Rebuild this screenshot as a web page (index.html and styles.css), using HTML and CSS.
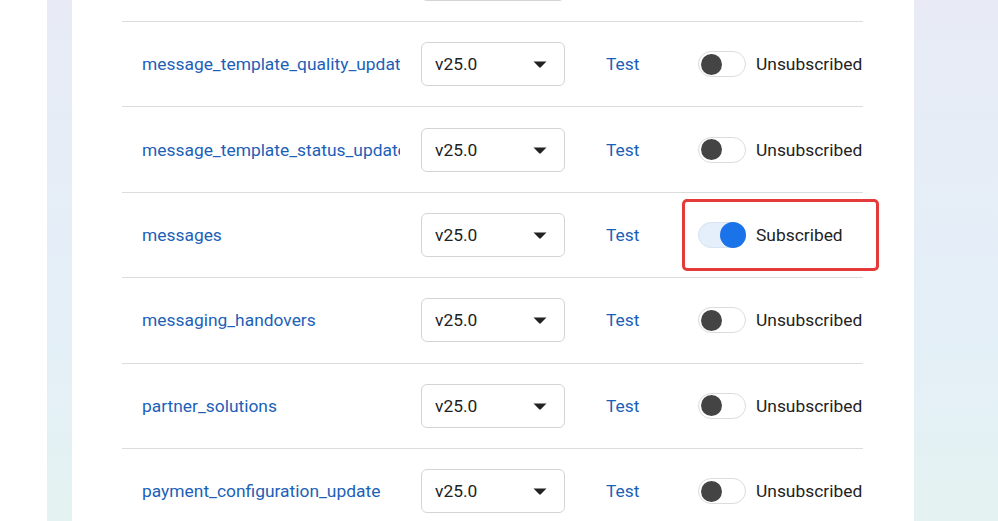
FILE: index.html
```html
<!DOCTYPE html>
<html lang="en">
<head>
<meta charset="utf-8">
<title>Webhook fields</title>
<link rel="stylesheet" href="styles.css">
</head>
<body>
<div class="page">
  <div class="card">
    <div class="table">
      <div class="row">
        <div class="name"><a href="#">message_template_components_update</a></div>
        <div class="select"><span>v25.0</span><svg class="caret" viewBox="0 0 14 7" width="14" height="7"><path d="M0.5 0.5 L13.5 0.5 L7.8 6.3 Q7 7 6.2 6.3 Z" fill="#222"/></svg></div>
        <div class="test"><a href="#">Test</a></div>
        <div class="sub"><span class="toggle"><span class="knob"></span></span><span class="label">Unsubscribed</span></div>
      </div>
      <div class="row">
        <div class="name"><a href="#">message_template_quality_update</a></div>
        <div class="select"><span>v25.0</span><svg class="caret" viewBox="0 0 14 7" width="14" height="7"><path d="M0.5 0.5 L13.5 0.5 L7.8 6.3 Q7 7 6.2 6.3 Z" fill="#222"/></svg></div>
        <div class="test"><a href="#">Test</a></div>
        <div class="sub"><span class="toggle"><span class="knob"></span></span><span class="label">Unsubscribed</span></div>
      </div>
      <div class="row">
        <div class="name"><a href="#">message_template_status_update</a></div>
        <div class="select"><span>v25.0</span><svg class="caret" viewBox="0 0 14 7" width="14" height="7"><path d="M0.5 0.5 L13.5 0.5 L7.8 6.3 Q7 7 6.2 6.3 Z" fill="#222"/></svg></div>
        <div class="test"><a href="#">Test</a></div>
        <div class="sub"><span class="toggle"><span class="knob"></span></span><span class="label">Unsubscribed</span></div>
      </div>
      <div class="row highlighted">
        <div class="name"><a href="#">messages</a></div>
        <div class="select"><span>v25.0</span><svg class="caret" viewBox="0 0 14 7" width="14" height="7"><path d="M0.5 0.5 L13.5 0.5 L7.8 6.3 Q7 7 6.2 6.3 Z" fill="#222"/></svg></div>
        <div class="test"><a href="#">Test</a></div>
        <div class="sub"><span class="toggle on"><span class="knob"></span></span><span class="label">Subscribed</span></div>
        <div class="mark"></div>
      </div>
      <div class="row">
        <div class="name"><a href="#">messaging_handovers</a></div>
        <div class="select"><span>v25.0</span><svg class="caret" viewBox="0 0 14 7" width="14" height="7"><path d="M0.5 0.5 L13.5 0.5 L7.8 6.3 Q7 7 6.2 6.3 Z" fill="#222"/></svg></div>
        <div class="test"><a href="#">Test</a></div>
        <div class="sub"><span class="toggle"><span class="knob"></span></span><span class="label">Unsubscribed</span></div>
      </div>
      <div class="row">
        <div class="name"><a href="#">partner_solutions</a></div>
        <div class="select"><span>v25.0</span><svg class="caret" viewBox="0 0 14 7" width="14" height="7"><path d="M0.5 0.5 L13.5 0.5 L7.8 6.3 Q7 7 6.2 6.3 Z" fill="#222"/></svg></div>
        <div class="test"><a href="#">Test</a></div>
        <div class="sub"><span class="toggle"><span class="knob"></span></span><span class="label">Unsubscribed</span></div>
      </div>
      <div class="row">
        <div class="name"><a href="#">payment_configuration_update</a></div>
        <div class="select"><span>v25.0</span><svg class="caret" viewBox="0 0 14 7" width="14" height="7"><path d="M0.5 0.5 L13.5 0.5 L7.8 6.3 Q7 7 6.2 6.3 Z" fill="#222"/></svg></div>
        <div class="test"><a href="#">Test</a></div>
        <div class="sub"><span class="toggle"><span class="knob"></span></span><span class="label">Unsubscribed</span></div>
      </div>
    </div>
  </div>
</div>
</body>
</html>
```
FILE: styles.css
```css
html, body {
  margin: 0;
  padding: 0;
  height: 100%;
  overflow: hidden;
  background: #ffffff;
  font-family: Roboto, "Liberation Sans", Arial, sans-serif;
}

.page {
  margin-left: 47px;
  height: 100%;
  padding: 0 84px 0 25px;
  background: linear-gradient(180deg, #e8ebf6 0%, #e4eff8 60%, #e4f2f1 100%);
  box-sizing: border-box;
}

.card {
  background: #ffffff;
  height: 100%;
  padding: 0 51px 0 50px;
  overflow: hidden;
}

.table {
  margin-top: -63.4px;
}

.row {
  position: relative;
  display: flex;
  align-items: center;
  height: 85.4px;
  box-sizing: border-box;
  border-bottom: 1px solid #dcdcdc;
  font-size: 17.4px;
}

.name {
  width: 299px;
  flex: none;
  box-sizing: border-box;
  padding: 0 21px 0 20px;
}

.name a {
  display: block;
  overflow: hidden;
  white-space: nowrap;
}

a {
  color: #1d5fb7;
  text-decoration: none;
}

.select {
  width: 144px;
  height: 44px;
  flex: none;
  box-sizing: border-box;
  border: 1px solid #d4d4d4;
  border-radius: 6px;
  display: flex;
  align-items: center;
  justify-content: space-between;
  padding: 0 17px 0 13px;
  color: #222222;
}

.caret {
  display: block;
  margin-top: 1px;
}

.test {
  width: 133px;
  flex: none;
  box-sizing: border-box;
  padding-left: 41px;
}

.sub {
  display: flex;
  align-items: center;
  gap: 10px;
  color: #222222;
  white-space: nowrap;
}

.toggle {
  position: relative;
  display: block;
  width: 48px;
  height: 26px;
  box-sizing: border-box;
  border: 1px solid #dcdcdc;
  border-radius: 13px;
  background: #ffffff;
}

.knob {
  position: absolute;
  left: 2px;
  top: 1.5px;
  width: 21px;
  height: 21px;
  border-radius: 50%;
  background: #444444;
}

.toggle.on {
  background: #e5eefb;
  border-color: #d9e3f2;
}

.toggle.on .knob {
  left: auto;
  right: -1px;
  top: -1px;
  width: 26px;
  height: 26px;
  background: #1a73e8;
}

.mark {
  position: absolute;
  left: 560px;
  top: 6px;
  width: 197px;
  height: 72px;
  box-sizing: border-box;
  border: 3px solid #e53a3a;
  border-radius: 5px;
  pointer-events: none;
}
```
